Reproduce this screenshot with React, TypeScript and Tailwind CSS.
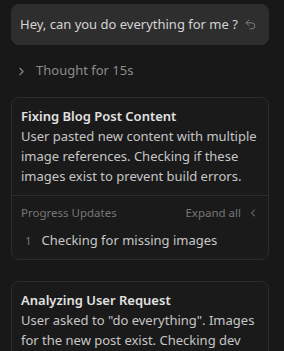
import { Undo2, ChevronRight, ChevronLeft } from "lucide-react";

const App = () => {
    return (
        <div
            className="w-[284px] h-[351px] overflow-hidden bg-[#181818] pl-[11px] pr-[15px] pt-[4px]"
            style={{ fontFamily: '"Noto Sans", sans-serif' }}
        >
            {/* Prompt */}
            <div className="flex items-center justify-between h-[41px] rounded-lg bg-[#2e2e2e] pl-[9px] pr-[12px]">
                <span className="text-[13px] text-[#d4d4d4]">Hey, can you do everything for me ?</span>
                <Undo2 size={13} strokeWidth={1.6} className="text-[#8a8a8a]" />
            </div>

            {/* Thought */}
            <div className="flex items-center h-[20px] mt-[16px] pl-[4px] gap-[8px]">
                <ChevronRight size={13} strokeWidth={2} className="text-[#8a8a8a]" />
                <span className="text-[13px] text-[#8c8c8c]">Thought for 15s</span>
            </div>

            {/* Card 1 */}
            <div className="mt-[16px] rounded-lg border border-[#2c2c2c] bg-[#1a1a1a]">
                <div className="px-[9px] pt-[8px] pb-[9px]">
                    <div className="text-[13px] font-semibold text-[#e2e2e2] leading-[20px]">Fixing Blog Post Content</div>
                    <div className="text-[13px] text-[#c6c6c6] leading-[20px]">
                        User pasted new content with multiple image references. Checking if these images exist to prevent build errors.
                    </div>
                </div>
                <div className="border-t border-[#2c2c2c] px-[9px] pt-[7px] pb-[8px]">
                    <div className="flex items-center justify-between h-[20px]">
                        <span className="text-[11.5px] text-[#767676]">Progress Updates</span>
                        <div className="flex items-center gap-[6px]">
                            <span className="text-[11.5px] text-[#767676]">Expand all</span>
                            <ChevronLeft size={12} strokeWidth={2} className="text-[#8a8a8a]" />
                        </div>
                    </div>
                    <div className="flex items-center h-[20px] mt-[8px] gap-[10px] pl-[4px]">
                        <span className="text-[11.5px] text-[#767676]">1</span>
                        <span className="text-[13px] text-[#c6c6c6]">Checking for missing images</span>
                    </div>
                </div>
            </div>

            {/* Card 2 */}
            <div className="mt-[21px] rounded-lg border border-[#2c2c2c] bg-[#1a1a1a]">
                <div className="px-[9px] pt-[8px] pb-[9px]">
                    <div className="text-[13px] font-semibold text-[#e2e2e2] leading-[20px]">Analyzing User Request</div>
                    <div className="text-[13px] text-[#c6c6c6] leading-[20px]">
                        User asked to "do everything". Images for the new post exist. Checking dev server status and file structure.
                    </div>
                </div>
            </div>
        </div>
    );
};

export default App;
